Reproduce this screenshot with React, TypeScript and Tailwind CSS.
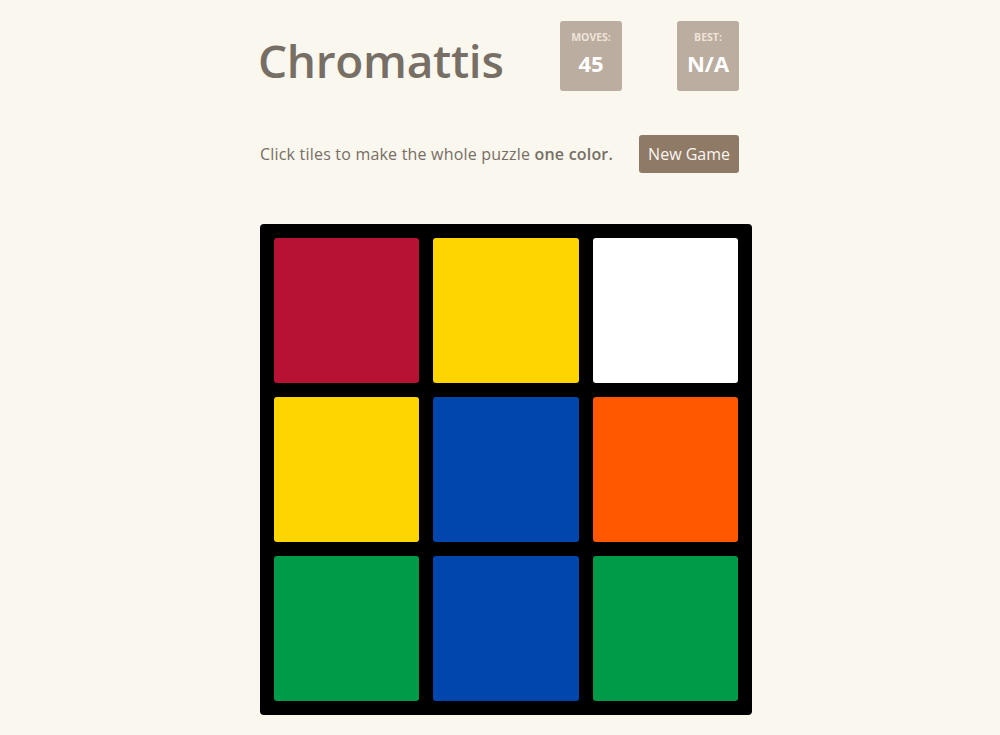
import React from 'react';

const COLORS: Record<string, string> = {
  red: 'bg-[#b71234]',
  yellow: 'bg-[#ffd500]',
  white: 'bg-white',
  blue: 'bg-[#0046ad]',
  orange: 'bg-[#ff5800]',
  green: 'bg-[#009b48]',
};

const tiles = ['red', 'yellow', 'white', 'yellow', 'blue', 'orange', 'green', 'blue', 'green'];

const ScoreBox: React.FC<{ label: string; value: string }> = ({ label, value }) => (
  <div className="w-[62px] h-[70px] bg-[#bbada0] rounded-[3px] flex flex-col items-center pt-[11px]">
    <span className="text-[10.5px] font-bold uppercase text-[#eee4da] leading-none">{label}</span>
    <span className="text-[22px] font-bold text-white leading-none mt-[9px]">{value}</span>
  </div>
);

const App: React.FC = () => {
  return (
    <div
      className="min-h-screen bg-[#faf7ee] text-[#776e65]"
      style={{ fontFamily: '"Open Sans", "Liberation Sans", sans-serif' }}
    >
      <div className="w-[479px] ml-[260px] pt-[21px]">
        {/* Header */}
        <div className="flex items-start">
          <h1 className="text-[46px] font-semibold leading-none mt-[16px] tracking-[-0.3px] -ml-[2px]">Chromattis</h1>
          <div className="ml-auto flex gap-[55px]">
            <ScoreBox label="Moves:" value="45" />
            <ScoreBox label="Best:" value="N/A" />
          </div>
        </div>

        {/* Intro */}
        <div className="flex items-center mt-[44px]">
          <p className="text-[16px] tracking-[0.2px]">
            Click tiles to make the whole puzzle <strong className="font-semibold">one color.</strong>
          </p>
          <button className="ml-auto h-[38px] px-[9px] bg-[#8f7a66] text-[#f9f6f2] text-[16px] rounded-[3px]">
            New Game
          </button>
        </div>

        {/* Board */}
        <div className="mt-[51px] w-[492px] h-[491px] bg-black rounded-[4px] p-[14px] grid grid-cols-3 gap-[14px]">
          {tiles.map((c, i) => (
            <div key={i} className={`${COLORS[c]} rounded-[3px]`} />
          ))}
        </div>
      </div>
    </div>
  );
};

export default App;
